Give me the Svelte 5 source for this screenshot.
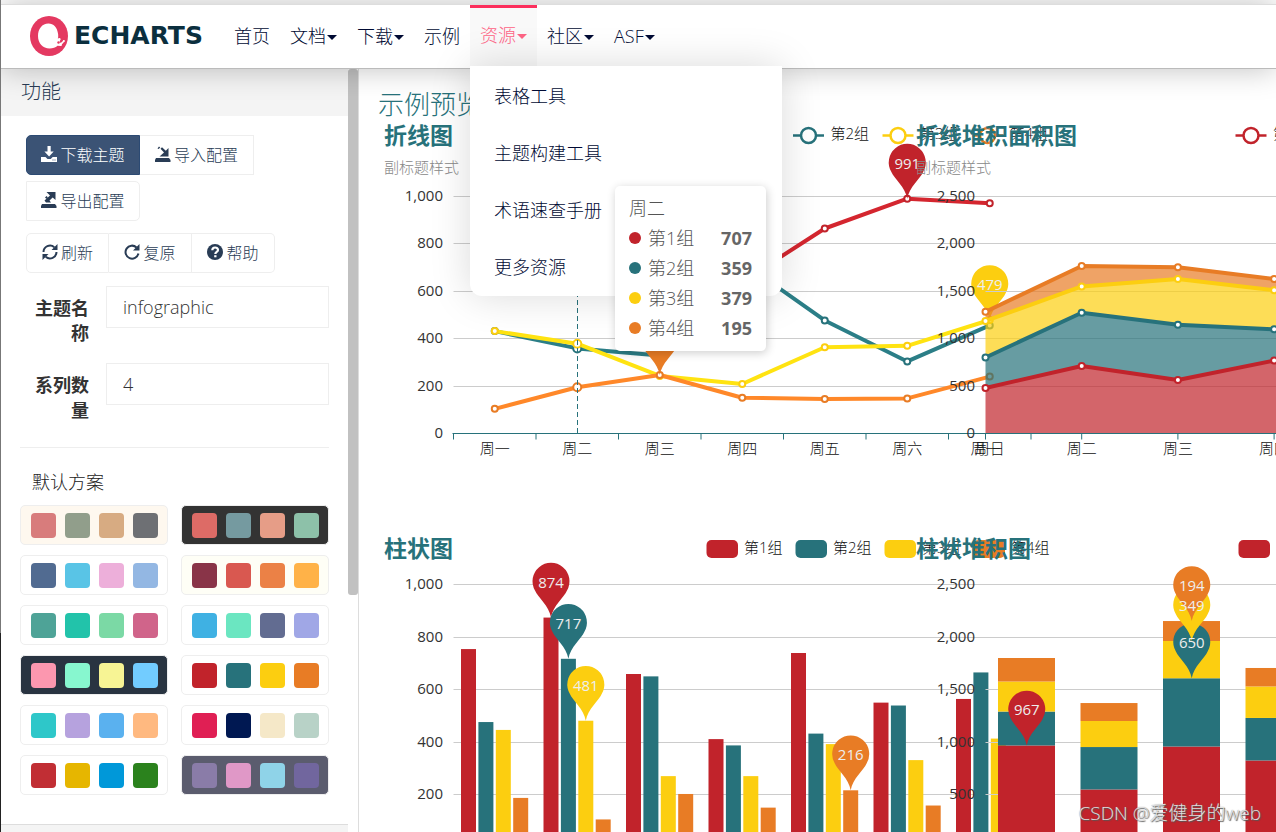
<script>
	const colors = ['#c1232b', '#27727b', '#fcce10', '#e87c25'];
	const hotColors = ['#d4262f', '#2b7e87', '#ffe311', '#ff8829'];
	const groups = ['第1组', '第2组', '第3组', '第4组'];
	const days = ['周一', '周二', '周三', '周四', '周五', '周六', '周日'];

	const nav = [
		{ text: '首页' },
		{ text: '文档', menu: true },
		{ text: '下载', menu: true },
		{ text: '示例' },
		{ text: '资源', menu: true, active: true },
		{ text: '社区', menu: true },
		{ text: 'ASF', menu: true }
	];
	const resources = ['表格工具', '主题构建工具', '术语速查手册', '更多资源'];

	const themes = [
		{ name: 'vintage', bg: '#fef8ef', colors: ['#d87c7c', '#919e8b', '#d7ab82', '#6e7074'] },
		{ name: 'dark', bg: '#333333', colors: ['#dd6b66', '#759aa0', '#e69d87', '#8dc1a9'] },
		{ name: 'westeros', bg: '#ffffff', colors: ['#516b91', '#59c4e6', '#edafda', '#93b7e3'] },
		{ name: 'essos', bg: '#fefef6', colors: ['#893448', '#d95850', '#eb8146', '#ffb248'] },
		{ name: 'wonderland', bg: '#ffffff', colors: ['#4ea397', '#22c3aa', '#7bd9a5', '#d0648a'] },
		{ name: 'walden', bg: '#ffffff', colors: ['#3fb1e3', '#6be6c1', '#626c91', '#a0a7e6'] },
		{ name: 'chalk', bg: '#293441', colors: ['#fc97af', '#87f7cf', '#f7f494', '#72ccff'] },
		{ name: 'infographic', bg: '#ffffff', colors: ['#c1232b', '#27727b', '#fcce10', '#e87c25'] },
		{ name: 'macarons', bg: '#ffffff', colors: ['#2ec7c9', '#b6a2de', '#5ab1ef', '#ffb980'] },
		{ name: 'roma', bg: '#ffffff', colors: ['#e01f54', '#001852', '#f5e8c8', '#b8d2c7'] },
		{ name: 'shine', bg: '#ffffff', colors: ['#c12e34', '#e6b600', '#0098d9', '#2b821d'] },
		{ name: 'purple-passion', bg: '#5b5c6e', colors: ['#8a7ca8', '#e098c7', '#8fd3e8', '#71669e'] }
	];

	const left = 75.5;
	const band = 82.5;
	const right = left + band * 7;
	const edge = 96.2;

	// one row per series
	const lines = [
		[700, 707, 680, 641, 865, 991, 972],
		[432, 359, 329, 723, 477, 304, 456],
		[432, 379, 243, 209, 364, 370, 479],
		[104, 195, 247, 151, 146, 148, 240]
	];
	const bars = [
		[754, 874, 659, 411, 739, 550, 564],
		[476, 717, 650, 387, 432, 539, 665],
		[446, 481, 270, 270, 392, 331, 413],
		[187, 105, 202, 150, 216, 158, 170]
	];
	// running totals, first series at the bottom
	const areaStack = [
		[480, 712, 564, 770, 700],
		[802, 1274, 1148, 1099, 1060],
		[1187, 1551, 1630, 1511, 1480],
		[1285, 1767, 1753, 1630, 1600]
	];
	const barStack = [
		[967, 548, 957, 824],
		[1290, 952, 1607, 1229],
		[1576, 1200, 1962, 1529],
		[1800, 1371, 2152, 1705]
	];

	const lineBase = 313.5;
	const barBase = 314;
	const lineY = (v, max) => lineBase - (v / max) * 237;
	const barY = (v, max) => barBase - (v / max) * 262.5;
	const mid = (i) => left + band * (i + 0.5);

	const linePins = [
		{ s: 0, i: 5, v: 991 },
		{ s: 2, i: 6, v: 479 },
		{ s: 3, i: 2, v: 247 }
	].map((p) => ({ ...p, x: mid(p.i), y: lineY(p.v, 1000) }));
	const barPins = [
		{ s: 0, i: 1, v: 874 },
		{ s: 1, i: 1, v: 717 },
		{ s: 2, i: 1, v: 481 },
		{ s: 3, i: 4, v: 216 }
	].map((p) => ({ ...p, x: left + band * p.i + 15 + 17.4 * p.s, y: barY(p.v, 1000) }));
	const stackPins = [
		{ s: 0, i: 0, v: 967, top: 967 },
		{ s: 1, i: 2, v: 650, top: 1607 },
		{ s: 2, i: 2, v: 349, top: 1962 },
		{ s: 3, i: 2, v: 194, top: 2152 }
	].map((p) => ({ ...p, x: mid(p.i), y: barY(p.top, 2500) }));

	const areaPoints = (s) => {
		const top = areaStack[s].map((v, i) => `${left + edge * i},${lineY(v, 2500)}`);
		const bottom = areaStack[s].map((_, i) => `${left + edge * i},${s ? lineY(areaStack[s - 1][i], 2500) : lineBase}`);
		return [...top, ...bottom.reverse()].join(' ');
	};

	let name = 'infographic';
	let count = 4;
</script>

{#snippet yAxis(base, height, step)}
	{#each [0, 1, 2, 3, 4, 5] as n}
		{@const y = Math.floor(base - (height / 5) * n) + 0.5}
		{#if n > 0}
			<line x1={left} x2={right} y1={y} y2={y} stroke="#ccc" />
		{/if}
		<text class="tick" x="65" y={y + 4} text-anchor="end">{(n * step).toLocaleString('en-US')}</text>
	{/each}
{/snippet}

{#snippet xAxis(width)}
	<line x1={left - 1} x2={right} y1={lineBase} y2={lineBase} stroke="#27727b" />
	{#each [0, 1, 2, 3, 4, 5, 6, 7] as i}
		<line x1={left + width * i} x2={left + width * i} y1={lineBase} y2={lineBase + 6} stroke="#27727b" />
	{/each}
{/snippet}

{#snippet lineLegend(from)}
	{#each groups as group, s}
		{#if s >= from}
			<g transform="translate({325.5 + 89.5 * s} 15.5)" stroke={colors[s]} stroke-width="2.5">
				<line x2="31" />
				<circle cx="15.5" r="7.5" fill="#fff" />
			</g>
			<text class="label" x={363 + 89.5 * s} y="19">{group}</text>
		{/if}
	{/each}
{/snippet}

{#snippet barLegend()}
	{#each groups as group, s}
		<rect x={328.5 + 89 * s} y="7" width="31.5" height="18" rx="5" fill={colors[s]} />
		<text class="label" x={366 + 89 * s} y="20">{group}</text>
	{/each}
{/snippet}

{#snippet pins(list)}
	{#each list as p}
		<path transform="translate({p.x} {p.y})" d="M0 0C-2 -12 -13 -20 -16 -27A18.5 18.5 0 1 1 16 -27C13 -20 2 -12 0 0Z" fill={colors[p.s]} />
	{/each}
	{#each list as p}
		<text class="pin" x={p.x} y={p.y - 30} text-anchor="middle">{p.v}</text>
	{/each}
{/snippet}

<div class="page">
	<header>
		<a class="logo" href="#home" aria-label="ECharts">
			<svg width="38" height="40" viewBox="0 0 38 40">
				<ellipse cx="19" cy="20" rx="19" ry="20" fill="#e43961" />
				<path d="M18.500 7.500C12 7.500 8 13 8 20C8 27.500 13 32.500 19.500 32.500C23 32.500 25.500 31.500 27.500 29.800L31 30C32 29.800 32.200 28.800 31.800 28.400L34 26C35 25.800 35.300 24.700 34.500 24.200C33.800 23.700 32.800 24.200 32.900 25L31 26.800L29.500 26.400L30 24.500C31.200 23.800 30.800 22 29.300 22C28.600 22 28 22.400 27.800 23C28.300 21.600 28.300 20 28.100 18C27.300 11.500 23.500 7.500 18.500 7.500Z" fill="#fff" />
				<circle cx="28.500" cy="26.500" r="1.200" fill="#e43961" />
			</svg>
			<span>ECHARTS</span>
		</a>
		<nav>
			<ul>
				{#each nav as item}
					<li class:active={item.active}>
						<a href="#nav">{item.text}{#if item.menu}<i class="caret"></i>{/if}</a>
						{#if item.active}
							<div class="dropdown">
								{#each resources as text}
									<a href="#resource">{text}</a>
								{/each}
							</div>
						{/if}
					</li>
				{/each}
			</ul>
		</nav>
	</header>

	<div class="content">
		<aside>
			<div class="panels">
				<h3 class="heading">功能</h3>
				<div class="panel">
					<div class="buttons files">
						<button class="primary">
							<svg width="16" height="16" viewBox="0 0 16 16" fill="currentColor"><path d="M6.500 0h3.200v5.500h3L8.100 10.500L3.400 5.500h3.100zM0 11h4.500l2 2h3.200l2-2H16v5H0zM11.500 13.500v1h1v-1zM13.500 13.500v1h1v-1z" /></svg>
							下载主题
						</button><button>
							<svg width="16" height="16" viewBox="0 0 16 16" fill="currentColor"><path d="M1 12h13l1.500 2v2H0v-2zM4.500 10.500h9V2l-2.700 2.700L7 1.200L5.500 2.700L9 6.500zM2.500 2.500l1.500-2l1.200 1l-1.500 1.500z" /></svg>
							导入配置
						</button><button class="last">
							<svg width="16" height="16" viewBox="0 0 16 16" fill="currentColor"><path d="M1 12h13l1.500 2v2H0v-2zM5.500 0h9v8l-2.800-2.500L8.500 8.500L10 10.500H5L3.500 8.500L9 3.500zM4 5.500l1.500-1.500l1.300 1.200L5.300 6.700z" /></svg>
							导出配置
						</button>
					</div>
					<div class="buttons tools">
						<button>
							<svg width="16" height="16" viewBox="0 0 16 16" fill="none" stroke="currentColor" stroke-width="2"><path d="M1.500 8A6.500 6.500 0 0 1 12.300 3.200M14.500 8A6.500 6.500 0 0 1 3.700 12.800" /><path d="M15.500 0v6H9.500zM.5 16v-6H6.500z" fill="currentColor" stroke="none" /></svg>
							刷新
						</button><button>
							<svg width="16" height="16" viewBox="0 0 16 16" fill="none" stroke="currentColor" stroke-width="2"><path d="M12.500 3.400A6.500 6.500 0 1 0 14.400 9.500" /><path d="M15.500 0v6.500H9z" fill="currentColor" stroke="none" /></svg>
							复原
						</button><button>
							<svg width="16" height="16" viewBox="0 0 16 16"><circle cx="8" cy="8" r="8" fill="currentColor" /><path d="M5.300 6.200C5.300 2.600 11 2.700 11 6C11 8 8.300 7.800 8.300 10" fill="none" stroke="#fff" stroke-width="2.200" /><path d="M7.200 11.200h2.300v2.100H7.200z" fill="#fff" /></svg>
							帮助
						</button>
					</div>
					<div class="field">
						<label for="theme-name">主题名称</label>
						<input id="theme-name" type="text" bind:value={name} />
					</div>
					<div class="field">
						<label for="series-count">系列数量</label>
						<input id="series-count" type="text" bind:value={count} />
					</div>
					<hr />
					<h4>默认方案</h4>
					<div class="themes">
						{#each themes as theme}
							<button
								class="theme"
								aria-label={theme.name}
								style="background: {theme.bg}"
								on:click={() => (name = theme.name)}
							>
								{#each theme.colors as color}
									<span style="background: {color}"></span>
								{/each}
							</button>
						{/each}
					</div>
				</div>
				<div class="heading next"></div>
			</div>
			<div class="scrollbar"><div></div></div>
		</aside>

		<main>
			<h2>示例预览</h2>
			<div class="charts">
				<section>
					<svg class="chart" width="711" height="413">
						{@render yAxis(lineBase, 237, 200)}
						{@render xAxis(band)}
						{#each days as day, i}
							<text class="label" x={mid(i)} y="334" text-anchor="middle">{day}</text>
						{/each}
						{@render lineLegend(1)}
						{#each lines as row, s}
							<polyline points={row.map((v, i) => `${mid(i)},${lineY(v, 1000)}`).join(' ')} fill="none" stroke={hotColors[s]} stroke-width="4" stroke-linejoin="bevel" />
							{#each row as v, i}
								<circle cx={mid(i)} cy={lineY(v, 1000)} r={i === 1 ? 4 : 3} fill="#fff" stroke={colors[s]} stroke-width="2" />
							{/each}
						{/each}
						<line x1="199.500" x2="199.500" y1="76" y2="313" stroke="#27727b" stroke-dasharray="5 3" />
						{@render pins(linePins)}
						<text class="title" x="6" y="24">折线图</text>
						<text class="subtitle" x="6" y="53">副标题样式</text>
					</svg>
					<div class="tooltip">
						<div>周二</div>
						{#each groups as group, s}
							<div class="row">
								<i style="background: {colors[s]}"></i>{group}<b>{lines[s][1]}</b>
							</div>
						{/each}
					</div>
				</section>

				<section>
					<svg class="chart" width="711" height="413">
						{@render yAxis(lineBase, 237, 500)}
						{#each areaStack as row, s}
							<polygon points={areaPoints(s)} fill={colors[s]} fill-opacity="0.7" />
						{/each}
						{@render xAxis(edge)}
						{#each areaStack as row, s}
							<polyline points={row.map((v, i) => `${left + edge * i},${lineY(v, 2500)}`).join(' ')} fill="none" stroke={colors[s]} stroke-width="4" stroke-linejoin="bevel" />
							{#each row as v, i}
								<circle cx={left + edge * i} cy={lineY(v, 2500)} r="3" fill="#fff" stroke={colors[s]} stroke-width="2" />
							{/each}
						{/each}
						{#each days.slice(0, 4) as day, i}
							<text class="label" x={left + edge * i} y="334" text-anchor="middle">{day}</text>
						{/each}
						{@render lineLegend(0)}
						<text class="title" x="6" y="24">折线堆积面积图</text>
						<text class="subtitle" x="6" y="53">副标题样式</text>
					</svg>
				</section>

				<section>
					<svg class="chart" width="711" height="413">
						{@render yAxis(barBase, 262.5, 200)}
						{@render barLegend()}
						{#each bars as row, s}
							{#each row as v, i}
								<rect x={left + band * i + 7.5 + 17.4 * s} y={barY(v, 1000)} width="15" height={barBase - barY(v, 1000)} fill={colors[s]} />
							{/each}
						{/each}
						{@render pins(barPins)}
						<text class="title" x="6" y="24">柱状图</text>
					</svg>
				</section>

				<section>
					<svg class="chart" width="711" height="413">
						{@render yAxis(barBase, 262.5, 500)}
						{@render barLegend()}
						{#each barStack as row, s}
							{#each row as v, i}
								{@const low = s ? barStack[s - 1][i] : 0}
								<rect x={left + band * i + 12.5} y={barY(v, 2500)} width="57" height={barY(low, 2500) - barY(v, 2500)} fill={colors[s]} />
							{/each}
						{/each}
						{@render pins(stackPins)}
						<text class="title" x="6" y="24">柱状堆积图</text>
					</svg>
				</section>
			</div>
		</main>
	</div>
	<div class="watermark">CSDN @爱健身的web</div>
</div>

<style>
	:global(body) {
		overflow: hidden;
	}

	.page {
		box-sizing: border-box;
		display: flex;
		flex-direction: column;
		height: 100vh;
		overflow: hidden;
		padding-top: 4px;
		border-left: 1px solid;
		border-image: linear-gradient(#777 76%, #222 76%) 1;
		background: #fff;
		color: #293c55;
		font-family: 'Open Sans', 'Noto Sans CJK SC', sans-serif;
		font-weight: 300;
		font-size: 18px;
	}

	a {
		color: inherit;
		text-decoration: none;
	}

	header {
		position: relative;
		z-index: 10;
		display: flex;
		flex: none;
		height: 63px;
		border-top: 1px solid #ddd;
		border-bottom: 1px solid #bbb;
		background: #fff;
		box-shadow: 0 0 30px rgba(0, 0, 0, 0.25);
		color: #000a33;
	}

	.logo {
		display: flex;
		align-items: center;
		gap: 6px;
		box-sizing: border-box;
		width: 223px;
		padding: 0 0 2px 29px;
		color: #0b2f3e;
		font: bold 25px 'DejaVu Sans', sans-serif;
	}

	ul {
		display: flex;
		margin: 0;
		padding: 0;
		list-style: none;
	}

	li {
		position: relative;
	}

	li > a {
		display: flex;
		align-items: center;
		box-sizing: border-box;
		height: 61px;
		padding: 0 10px 1px;
		border-top: 3px solid transparent;
		line-height: 25px;
	}

	.caret {
		margin: 2px 0 0 1px;
		border: 5px solid transparent;
		border-top-color: currentColor;
		border-bottom: 0;
	}

	.active > a {
		padding-bottom: 4px;
		border-top-color: #fc2f5d;
		background: #f9f9f9;
		color: #fe6485;
	}

	.dropdown {
		position: absolute;
		top: 61px;
		left: 0;
		width: 312px;
		padding-top: 2px;
		border-radius: 0 0 12px 12px;
		background: #fff;
		box-shadow: 0 0 40px rgba(0, 0, 0, 0.15);
	}

	.dropdown a {
		display: block;
		padding-left: 24px;
		line-height: 57px;
	}

	.content {
		display: flex;
		flex: 1;
		min-height: 0;
	}

	aside {
		display: flex;
		flex: none;
		width: 357px;
		overflow: hidden;
		border-right: 1px solid #ddd;
	}

	.panels {
		flex: 1;
	}

	.scrollbar {
		width: 10px;
	}

	.scrollbar div {
		height: 69%;
		border-radius: 3px;
		background: #c1c1c1;
	}

	.heading {
		height: 47px;
		margin: 0;
		padding-left: 20px;
		background: #f4f4f4;
		font-size: 20px;
		font-weight: 300;
		line-height: 46px;
	}

	.next {
		border-top: 1px solid #ddd;
	}

	.panel {
		padding: 19px 19px 29px;
	}

	.buttons {
		display: flex;
		flex-wrap: wrap;
		margin: 0 0 12px 6px;
	}

	.buttons button {
		display: flex;
		align-items: center;
		justify-content: center;
		gap: 3px;
		box-sizing: border-box;
		width: 83px;
		height: 40px;
		padding: 0 0 2px;
		border: 1px solid #eee;
		background: #fff;
		color: #293c55;
		font: inherit;
		font-size: 16px;
	}

	.files {
		row-gap: 6px;
	}

	.buttons.files button {
		width: 114px;
	}

	.buttons button + button {
		border-left: 0;
	}

	.buttons button:first-child {
		border-radius: 5px 0 0 5px;
	}

	.buttons button:last-child {
		border-radius: 0 5px 5px 0;
	}

	.files button.last {
		border-left: 1px solid #eee;
	}

	.buttons button.primary {
		border-color: #2c4a73;
		background: #3b5375;
		color: #fff;
	}

	.field {
		display: flex;
		gap: 17px;
		height: 50px;
		margin-bottom: 27px;
	}

	.tools + .field {
		margin-top: 13px;
	}

	label {
		flex: none;
		width: 54px;
		margin-left: 15px;
		padding-top: 10px;
		color: #333;
		font-weight: 700;
		line-height: 25px;
		text-align: right;
		word-break: break-all;
	}

	input {
		box-sizing: border-box;
		width: 100%;
		min-width: 0;
		height: 42px;
		padding: 0 16px;
		border: 1px solid #eee;
		color: #333;
		font: inherit;
	}

	hr {
		margin: 34px 0 22px;
		border: 0;
		border-top: 1px solid #eee;
	}

	h4 {
		margin: 0 0 10px 12px;
		color: #222;
		font-size: 18px;
		font-weight: 300;
		line-height: 25px;
	}

	.themes {
		display: grid;
		grid-template-columns: 1fr 1fr;
		gap: 10px 13px;
	}

	.theme {
		display: flex;
		justify-content: center;
		align-items: center;
		gap: 9px;
		height: 40px;
		padding: 0;
		border: 1px solid #eee;
		border-radius: 5px;
	}

	.theme span {
		width: 25px;
		height: 25px;
		border-radius: 4px;
	}

	main {
		flex: 1;
		min-width: 0;
		overflow: hidden;
		padding: 20px 0 0 19px;
	}

	h2 {
		margin: 0;
		color: #27727b;
		font-size: 26px;
		font-weight: 300;
		line-height: 31px;
	}

	.charts {
		display: grid;
		grid-template-columns: repeat(2, 532px);
	}

	section {
		position: relative;
		height: 413px;
	}

	.chart {
		display: block;
	}

	.tick {
		fill: #333;
		font-size: 15px;
		font-weight: 400;
	}

	.label {
		fill: #111;
		font-size: 15px;
	}

	.title {
		fill: #27727b;
		font-size: 23px;
		font-weight: 700;
	}

	.subtitle {
		fill: #888;
		font-size: 15px;
	}

	.pin {
		fill: #eee;
		font-size: 15px;
		font-weight: 500;
	}

	.tooltip {
		position: absolute;
		z-index: 20;
		top: 66px;
		left: 237px;
		box-sizing: border-box;
		width: 151px;
		padding: 7px 14px 8px;
		border-radius: 5px;
		background: #fff;
		box-shadow: 1px 2px 10px rgba(0, 0, 0, 0.2);
		color: #555;
		line-height: 30px;
	}

	.row {
		display: flex;
		align-items: center;
	}

	.row i {
		width: 12px;
		height: 12px;
		margin-right: 7px;
		border-radius: 50%;
	}

	.row b {
		margin-left: auto;
		color: #666;
		font-weight: 700;
	}

	.watermark {
		position: absolute;
		right: 15px;
		bottom: 6px;
		color: rgba(255, 255, 255, 0.8);
		font-size: 19px;
		font-weight: 300;
		line-height: 26px;
		text-shadow: 1px 1px 1px #555, 0 0 1px #777;
	}
</style>
